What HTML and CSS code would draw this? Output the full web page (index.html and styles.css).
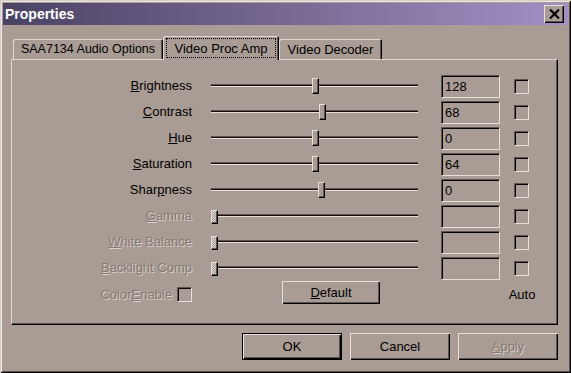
FILE: index.html
```html
<!DOCTYPE html>
<html lang="en">
<head>
    <meta charset="UTF-8">
    <title>Properties</title>
    <link rel="stylesheet" href="styles.css">
</head>
<body>
    <div class="window">
        <div class="titlebar">
            <span class="title">Properties</span>
            <button class="close-btn">
                <svg width="11" height="10" viewBox="0 0 11 10">
                    <path d="M1 0.5 L10 9.5 M10 0.5 L1 9.5" stroke="#000" stroke-width="2.2" fill="none"/>
                </svg>
            </button>
        </div>

        <div class="content">
            <div class="tabs">
                <div class="tab tab-audio">SAA7134 Audio Options</div>
                <div class="tab tab-proc active"><span class="focus">Video Proc Amp</span></div>
                <div class="tab tab-decoder">Video Decoder</div>
            </div>

            <div class="panel">
                <div class="grid">
                    <div class="label"><u>B</u>rightness</div>
                    <div class="slider"><div class="track"></div><div class="thumb" style="left: 101px"></div></div>
                    <div class="edit">128</div>
                    <div class="check"></div>

                    <div class="label"><u>C</u>ontrast</div>
                    <div class="slider"><div class="track"></div><div class="thumb" style="left: 108px"></div></div>
                    <div class="edit">68</div>
                    <div class="check"></div>

                    <div class="label"><u>H</u>ue</div>
                    <div class="slider"><div class="track"></div><div class="thumb" style="left: 101px"></div></div>
                    <div class="edit">0</div>
                    <div class="check"></div>

                    <div class="label"><u>S</u>aturation</div>
                    <div class="slider"><div class="track"></div><div class="thumb" style="left: 101px"></div></div>
                    <div class="edit">64</div>
                    <div class="check"></div>

                    <div class="label">Shar<u>p</u>ness</div>
                    <div class="slider"><div class="track"></div><div class="thumb" style="left: 107px"></div></div>
                    <div class="edit">0</div>
                    <div class="check"></div>

                    <div class="label off"><u>G</u>amma</div>
                    <div class="slider"><div class="track"></div><div class="thumb off" style="left: 0px"></div></div>
                    <div class="edit"></div>
                    <div class="check"></div>

                    <div class="label off"><u>W</u>hite Balance</div>
                    <div class="slider"><div class="track"></div><div class="thumb off" style="left: 0px"></div></div>
                    <div class="edit"></div>
                    <div class="check"></div>

                    <div class="label off"><u>B</u>acklight Comp</div>
                    <div class="slider"><div class="track"></div><div class="thumb off" style="left: 0px"></div></div>
                    <div class="edit"></div>
                    <div class="check"></div>

                    <div class="color-enable">
                        <span class="off">Color<u>E</u>nable</span>
                        <div class="check"></div>
                    </div>
                    <div class="default-cell"><button class="btn btn-default-small"><u>D</u>efault</button></div>
                    <div></div>
                    <div class="auto">Auto</div>
                </div>
            </div>

            <div class="buttons">
                <button class="btn btn-ok">OK</button>
                <button class="btn">Cancel</button>
                <button class="btn off"><u>A</u>pply</button>
            </div>
        </div>
    </div>
</body>
</html>
```

FILE: styles.css
```css
* {
    margin: 0;
    padding: 0;
    box-sizing: border-box;
}

body {
    font-family: "Liberation Sans", Arial, sans-serif;
    font-size: 13px;
    color: #000;
    background-color: #a89c94;
}

u {
    text-decoration: underline;
    text-underline-offset: 1px;
}

/* Janela */
.window {
    width: 571px;
    height: 373px;
    padding: 3px;
    background-color: #a89c94;
    box-shadow: inset 1px 1px #d8d0c8, inset -1px -1px #000,
                inset 2px 2px #ece6e0, inset -2px -2px #5c534e;
    display: flex;
    flex-direction: column;
}

.titlebar {
    height: 22px;
    display: flex;
    align-items: center;
    justify-content: space-between;
    padding: 0 4px 0 2px;
    background: linear-gradient(to right, #4a4363, #a38fc4);
}

.title {
    color: #fff;
    font-weight: bold;
    font-size: 14px;
}

.close-btn {
    width: 20px;
    height: 18px;
    border: none;
    background-color: #a89c94;
    box-shadow: inset 1px 1px #e8e0d8, inset -1px -1px #000, inset -2px -2px #5c534e;
    display: flex;
    align-items: center;
    justify-content: center;
}

.content {
    flex: 1;
    padding: 11px 10px 0 8px;
}

/* Abas */
.tabs {
    display: flex;
    align-items: flex-end;
    height: 23px;
    margin-left: 2px;
}

.tab {
    height: 20px;
    display: flex;
    align-items: center;
    justify-content: center;
    font-size: 12.5px;
    border-radius: 2px 2px 0 0;
    background-color: #a89c94;
    box-shadow: inset 1px 1px #e0d8d0, inset -1px 0 #000, inset -2px 0 #5c534e;
}

.tab-audio {
    width: 150px;
}

.tab-proc {
    width: 116px;
}

.tab-decoder {
    width: 103px;
    font-size: 13px;
}

.tab.active {
    position: relative;
    z-index: 1;
    height: 24px;
    margin-bottom: -1px;
    padding: 2px 3px 2px 3px;
    font-size: 13px;
}

.focus {
    flex: 1;
    height: 100%;
    display: flex;
    align-items: center;
    justify-content: center;
    outline: 1px dotted #000;
    outline-offset: -1px;
}

/* Painel */
.panel {
    height: 266px;
    border-left: 1px solid #e0d8d0;
    border-top: 1px solid #e0d8d0;
    border-right: 1px solid #000;
    border-bottom: 1px solid #000;
    box-shadow: inset -1px -1px #5c534e;
    padding-top: 15px;
}

.grid {
    display: grid;
    grid-template-columns: 199px 230px 73px 15px;
    grid-auto-rows: 23px;
    row-gap: 3px;
    align-items: center;
}

.label {
    text-align: right;
    padding-right: 19px;
    margin-top: -2px;
}

.off {
    color: #867b74;
    text-shadow: 1px 1px #d8d0c8;
}

.slider {
    position: relative;
    width: 207px;
    height: 23px;
    display: flex;
    align-items: center;
}

.track {
    width: 207px;
    height: 3px;
    margin-top: -2px;
    border-top: 1px solid #5c534e;
    border-bottom: 1px solid #e8e0d8;
    background-color: #140f0d;
}

.thumb {
    position: absolute;
    top: 3px;
    width: 7px;
    height: 16px;
    background-color: #a89c94;
    border-left: 1px solid #e8e0d8;
    border-top: 1px solid #e8e0d8;
    border-right: 1px solid #000;
    border-bottom: 1px solid #000;
    box-shadow: inset -1px -1px #5c534e;
}

.thumb.off {
    top: 5px;
    height: 14px;
    background: repeating-conic-gradient(#ddd5cd 0 25%, #a89c94 0 50%) 0 0 / 2px 2px;
}

.edit {
    width: 59px;
    height: 23px;
    padding-left: 3px;
    display: flex;
    align-items: center;
    border: 1px solid;
    border-color: #5c534e #e8e0d8 #e8e0d8 #5c534e;
    box-shadow: inset 1px 1px #000;
}

.check {
    width: 15px;
    height: 15px;
    border: 1px solid;
    border-color: #5c534e #e8e0d8 #e8e0d8 #5c534e;
    box-shadow: inset 1px 1px #000;
}

.color-enable {
    display: flex;
    align-items: center;
    justify-content: flex-end;
    gap: 5px;
    padding-right: 19px;
}

.default-cell {
    align-self: start;
    margin-top: -2px;
}

.btn-default-small {
    width: 98px;
    height: 23px;
    margin-left: 71px;
}

.auto {
    justify-self: center;
    white-space: nowrap;
    padding-left: 1px;
}

/* Botoes */
.btn {
    font-family: "Liberation Sans", Arial, sans-serif;
    font-size: 13px;
    color: #000;
    border: none;
    background-color: #a89c94;
    box-shadow: inset 1px 1px #e8e0d8, inset -1px -1px #000, inset -2px -2px #5c534e;
}

.buttons {
    display: flex;
    justify-content: flex-end;
    gap: 8px;
    margin-top: 8px;
}

.buttons .btn {
    width: 100px;
    height: 27px;
}

.btn-ok {
    border: 1px solid #000;
}

.btn.off {
    color: #867b74;
}
```
